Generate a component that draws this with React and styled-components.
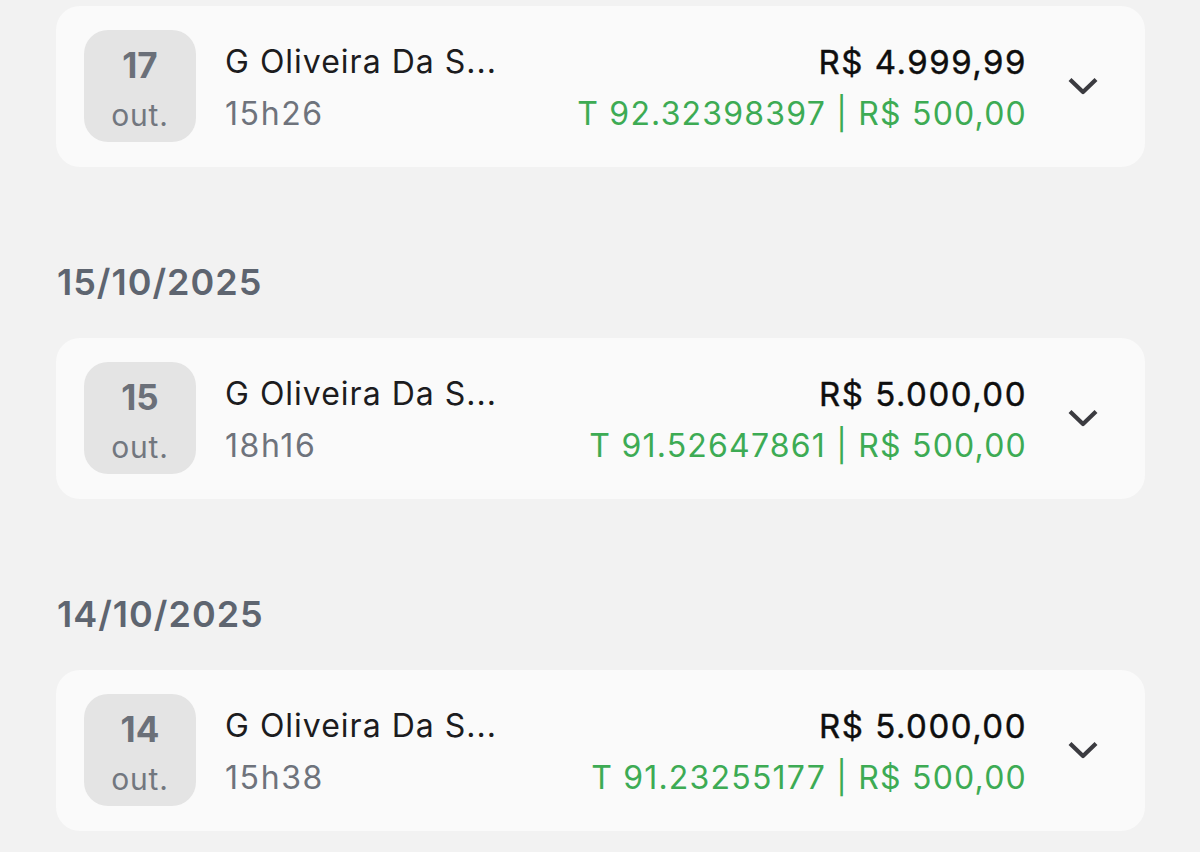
import React from "react";
import styled, { createGlobalStyle } from "styled-components";

const GlobalStyle = createGlobalStyle`
  html, body {
    margin: 0;
    padding: 0;
    background: #f2f2f2;
  }
  body {
    font-family: Inter, "Open Sans", "Liberation Sans", sans-serif;
    -webkit-font-smoothing: antialiased;
  }
`;

const Page = styled.div`
  width: 1200px;
  min-height: 852px;
  box-sizing: border-box;
  padding: 6px 55px 0 56px;
  background: #f2f2f2;
`;

const Section = styled.section`
  display: flex;
  flex-direction: column;
`;

const DayHeader = styled.h2`
  margin: 95px 0 36px 1px;
  height: 40px;
  line-height: 40px;
  font-size: 36px;
  font-weight: 600;
  color: #5e6570;
  letter-spacing: 1px;
`;

const Card = styled.div`
  display: flex;
  align-items: center;
  box-sizing: border-box;
  height: 161px;
  padding: 24px 46px 25px 28px;
  background: #fafafa;
  border-radius: 24px;
`;

const DateBox = styled.div`
  flex: none;
  box-sizing: border-box;
  width: 112px;
  height: 112px;
  padding-top: 15px;
  border-radius: 24px;
  background: #e4e4e4;
  display: flex;
  flex-direction: column;
  align-items: center;
  color: #6b7079;
`;

const Day = styled.div`
  font-size: 35px;
  font-weight: 700;
  line-height: 40px;
  margin-bottom: 10px;
`;

const Month = styled.div`
  font-size: 30px;
  font-weight: 400;
  line-height: 40px;
  letter-spacing: 0.8px;
  color: #72777f;
`;

const Info = styled.div`
  flex: 1;
  display: flex;
  flex-direction: column;
  margin-left: 29px;
  padding-top: 4px;
`;

const Name = styled.div`
  font-size: 32px;
  line-height: 52px;
  color: #1c1c1e;
  letter-spacing: 1px;
  white-space: nowrap;
`;

const Time = styled.div`
  font-size: 32px;
  line-height: 52px;
  color: #6e737c;
  letter-spacing: 1.6px;
`;

const Amounts = styled.div`
  display: flex;
  flex-direction: column;
  align-items: flex-end;
  padding-top: 4px;
`;

const Amount = styled.div`
  font-size: 33px;
  font-weight: 400;
  line-height: 52px;
  color: #0e0e0e;
  letter-spacing: 1.5px;
  margin-right: -1px;
  -webkit-text-stroke: 0.4px #0e0e0e;
`;

const Detail = styled.div`
  font-size: 32px;
  line-height: 52px;
  color: #3dab54;
  letter-spacing: 1.2px;
  margin-right: -1px;
  white-space: nowrap;
`;

const Toggle = styled.button`
  flex: none;
  margin-left: 41px;
  padding: 0;
  border: none;
  background: transparent;
  width: 32px;
  height: 20px;
  display: flex;
  cursor: pointer;
`;

const Chevron = () => (
  <svg width="32" height="20" viewBox="0 0 32 20" fill="none">
    <path
      d="M3 3.5 L16 16 L29 3.5"
      stroke="#3b3b40"
      strokeWidth="4.2"
      strokeLinejoin="round"
    />
  </svg>
);

const items = [
  {
    header: null,
    day: "17",
    time: "15h26",
    amount: "R$ 4.999,99",
    detail: "T 92.32398397 | R$ 500,00",
  },
  {
    header: "15/10/2025",
    day: "15",
    time: "18h16",
    amount: "R$ 5.000,00",
    detail: "T 91.52647861 | R$ 500,00",
  },
  {
    header: "14/10/2025",
    day: "14",
    time: "15h38",
    amount: "R$ 5.000,00",
    detail: "T 91.23255177 | R$ 500,00",
  },
];

export default function App() {
  return (
    <>
      <GlobalStyle />
      <Page>
        {items.map((it) => (
          <Section key={it.day}>
            {it.header && <DayHeader>{it.header}</DayHeader>}
            <Card>
              <DateBox>
                <Day>{it.day}</Day>
                <Month>out.</Month>
              </DateBox>
              <Info>
                <Name>G Oliveira Da S...</Name>
                <Time>{it.time}</Time>
              </Info>
              <Amounts>
                <Amount>{it.amount}</Amount>
                <Detail>{it.detail}</Detail>
              </Amounts>
              <Toggle aria-label="Expandir">
                <Chevron />
              </Toggle>
            </Card>
          </Section>
        ))}
      </Page>
    </>
  );
}
